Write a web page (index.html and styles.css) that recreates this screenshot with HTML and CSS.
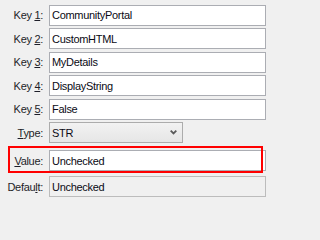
FILE: index.html
```html
<!DOCTYPE html>
<html>
<head>
<meta charset="utf-8">
<link rel="stylesheet" href="styles.css">
</head>
<body>
<div class="form">
  <div class="row"><span class="lbl">Key <u>1</u>:</span><div class="field">CommunityPortal</div></div>
  <div class="row"><span class="lbl">Key <u>2</u>:</span><div class="field">CustomHTML</div></div>
  <div class="row"><span class="lbl">Key <u>3</u>:</span><div class="field">MyDetails</div></div>
  <div class="row"><span class="lbl">Key <u>4</u>:</span><div class="field">DisplayString</div></div>
  <div class="row"><span class="lbl">Key <u>5</u>:</span><div class="field">False</div></div>
  <div class="row"><span class="lbl"><u>T</u>ype:</span><div class="field select"><span>STR</span><svg class="chev" width="7" height="5" viewBox="0 0 7 5"><polyline points="0.7,0.7 3.5,3.5 6.3,0.7" fill="none" stroke="#5a5a5a" stroke-width="1.8"/></svg></div></div>
  <div class="row value-row"><span class="lbl"><u>V</u>alue:</span><div class="field">Unchecked</div><div class="highlight"></div></div>
  <div class="row default-row"><span class="lbl">Defau<u>l</u>t:</span><div class="field disabled">Unchecked</div></div>
</div>
</body>
</html>
```
FILE: styles.css
```css
html, body {
  margin: 0;
  background: #f0f0f0;
}
body {
  font-family: "Liberation Sans", Arial, sans-serif;
  font-size: 11px;
  letter-spacing: -0.3px;
}
.form {
  width: 266px;
  display: flex;
  flex-direction: column;
  gap: 2.5px;
  padding-top: 4.5px;
}
.row {
  display: grid;
  grid-template-columns: 43px 1fr;
  column-gap: 6px;
  align-items: center;
  height: 21px;
}
.lbl {
  text-align: right;
  white-space: nowrap;
  color: #1e1e28;
}
.lbl u {
  text-underline-offset: 1px;
}
.field {
  box-sizing: border-box;
  height: 21px;
  border: 1px solid #abadb3;
  background: #fff;
  padding: 0 2px;
  display: flex;
  align-items: center;
  color: #0a0a14;
  white-space: nowrap;
}
.select {
  width: 134px;
  justify-self: start;
  justify-content: space-between;
  padding-right: 5px;
  border-color: #acacac;
  background: linear-gradient(#f2f2f2, #e6e6e6);
}
.chev {
  display: block;
}
.value-row {
  margin-top: 4.5px;
  position: relative;
}
.default-row {
  margin-top: 2.5px;
}
.disabled {
  background: #f0f0f0;
  border-color: #bcbcbc;
}
.highlight {
  position: absolute;
  left: 8px;
  top: -4px;
  width: 255px;
  height: 27px;
  box-sizing: border-box;
  border: 2px solid #ff0000;
  pointer-events: none;
}
```
